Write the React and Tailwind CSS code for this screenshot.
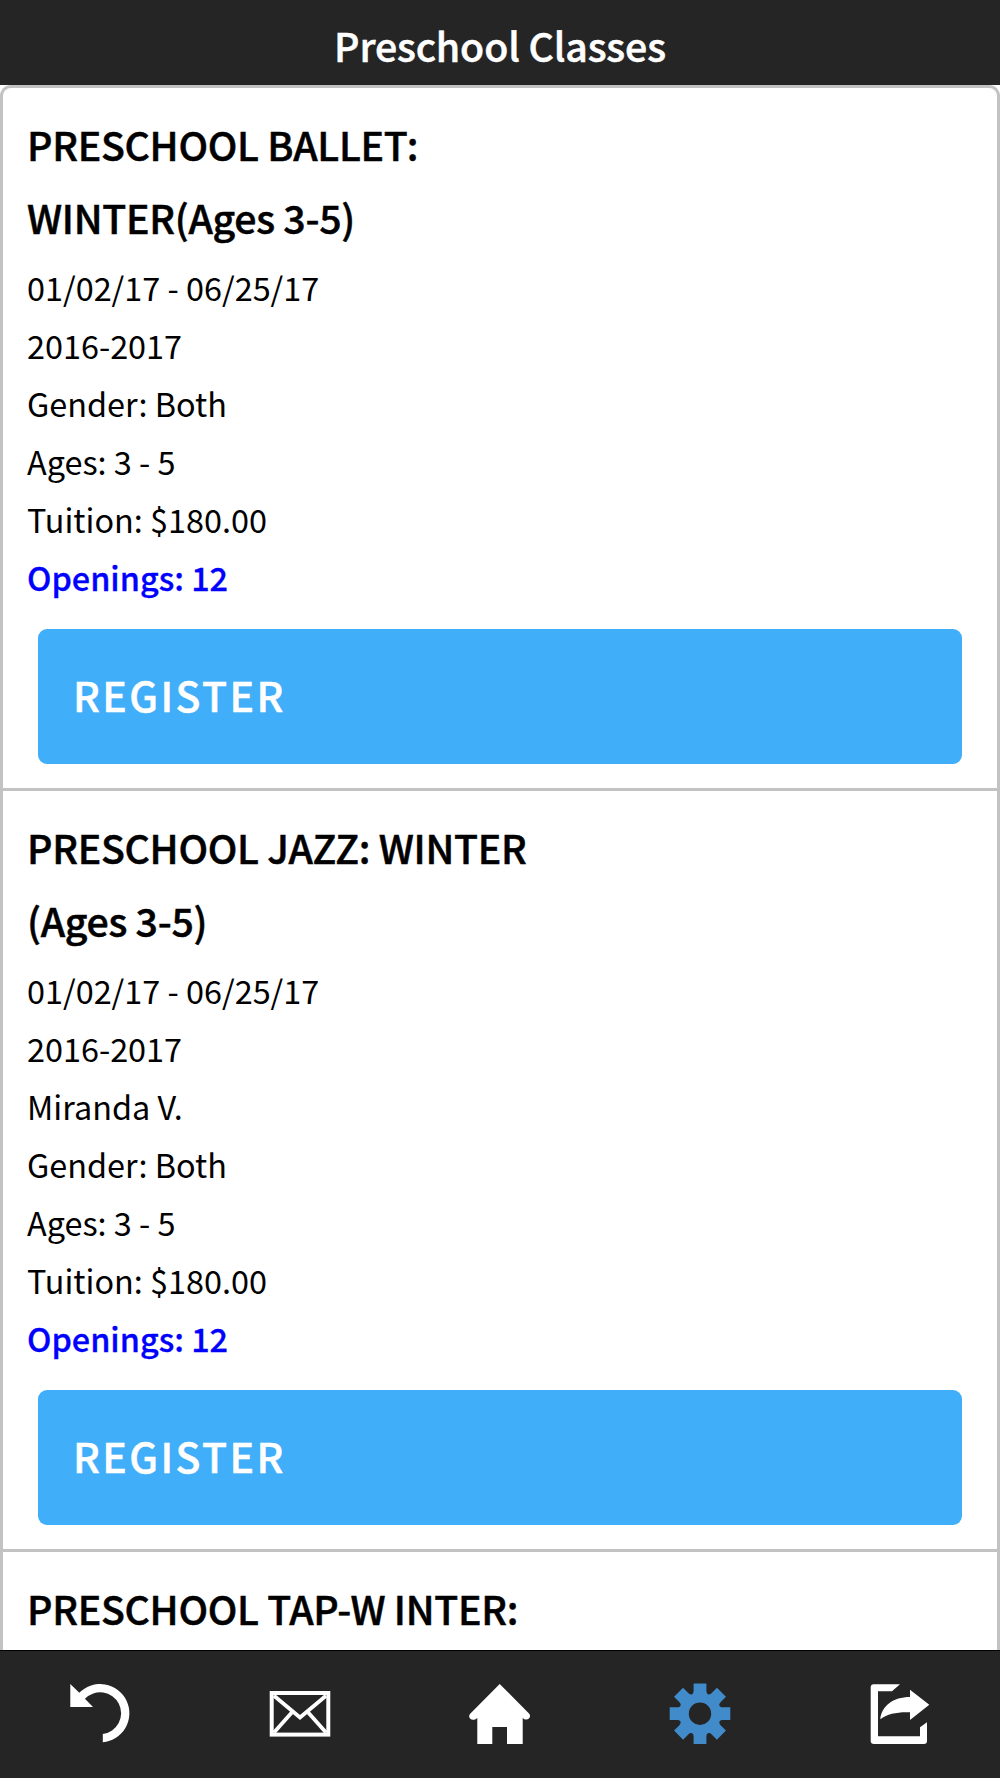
import React from 'react';

const classes = [
  {
    id: 'ballet',
    title: ['PRESCHOOL BALLET:', 'WINTER(Ages 3-5)'],
    details: ['01/02/17 - 06/25/17', '2016-2017', 'Gender: Both', 'Ages: 3 - 5', 'Tuition: $180.00'],
    openings: 12,
  },
  {
    id: 'jazz',
    title: ['PRESCHOOL JAZZ: WINTER', '(Ages 3-5)'],
    details: ['01/02/17 - 06/25/17', '2016-2017', 'Miranda V.', 'Gender: Both', 'Ages: 3 - 5', 'Tuition: $180.00'],
    openings: 12,
  },
  {
    id: 'tap',
    title: ['PRESCHOOL TAP-W INTER:'],
  },
];

function BackIcon() {
  return (
    <svg className="w-16 h-16" viewBox="0 0 64 64" fill="currentColor">
      <path d="M2.3 2L11.3 10.8A29.2 29.2 0 1 1 34.8 60.3V52.1A21 21 0 1 0 16.9 16.8L25 25H2.3Z" />
    </svg>
  );
}

function MailIcon() {
  return (
    <svg className="w-16 h-16" viewBox="0 0 64 64" fill="none" stroke="currentColor" strokeWidth="4">
      <rect x="3.7" y="11" width="56.6" height="41.6" />
      <path d="M6 13.8L32 35.5L58 13.8M6 50.6L23.8 30.4M58 50.6L40.2 30.4" strokeWidth="3.8" />
    </svg>
  );
}

function HomeIcon() {
  return (
    <svg className="w-16 h-16" viewBox="0 0 64 64" fill="currentColor">
      <path d="M31.7 2L61 31.5C64 35 60 39 56 37L54.7 36V62H39V45H24.3V62H9.3V36L7.5 37.2C3 39.5-.8 35 2.2 31.7Z" />
    </svg>
  );
}

// Eight square teeth joined by rounded notches
function gearPath() {
  const at = (x, y, turn) => {
    const a = (turn * Math.PI) / 4;
    const px = 32 + x * Math.cos(a) - y * Math.sin(a);
    const py = 31.7 + x * Math.sin(a) + y * Math.cos(a);
    return `${px.toFixed(2)} ${py.toFixed(2)}`;
  };
  let d = `M${at(-6.4, -23, 0)}`;
  for (let i = 0; i < 8; i++) {
    d += `L${at(-6.4, -30.3, i)}L${at(6.4, -30.3, i)}L${at(6.4, -23, i)}`;
    d += `C${at(6.4, -19.2, i)} ${at(-6.4, -19.2, i + 1)} ${at(-6.4, -23, i + 1)}`;
  }
  return `${d}ZM43.2 31.7A11.2 11.2 0 1 0 20.8 31.7A11.2 11.2 0 1 0 43.2 31.7Z`;
}

function GearIcon() {
  return (
    <svg className="w-16 h-16 text-[#428bca]" viewBox="0 0 64 64" fill="currentColor">
      <path fillRule="evenodd" d={gearPath()} />
    </svg>
  );
}

function ShareIcon() {
  return (
    <svg className="w-16 h-16" viewBox="0 0 64 64" fill="currentColor">
      <path d="M32 2.2L24 9.3H10V54.3H52V45.3L59 40.3V59Q59 62 56 62H6Q2.7 62 2.7 58.7V5.2Q2.7 2.2 5.7 2.2Z" />
      <path d="M12.3 37.3C13.5 24 25 15 42 15V7.7L61.3 22.7L42 38V30.3C30 29.8 20 31.5 12.3 37.3Z" />
    </svg>
  );
}

function ClassCard({ item }) {
  return (
    <li className="border-b-[3px] last:border-b-0 border-[#c2c2c2] pl-6 pr-[35px] pt-5 pb-6 shrink-0">
      <h2 className="text-[39.3px] leading-[72.5px] font-medium tracking-[-0.3px] [-webkit-text-stroke:0.5px_currentColor] mb-[5px]">
        {item.title.map((line) => (
          <span key={line} className="block">{line}</span>
        ))}
      </h2>
      {item.details && (
        <>
          <div className="text-[32.4px] leading-[58px]">
            {item.details.map((line) => (
              <p key={line}>{line}</p>
            ))}
            <p className="font-medium text-[#0000ff] [-webkit-text-stroke:0.3px_currentColor]">Openings: {item.openings}</p>
          </div>
          <button className="block w-[924px] h-[135px] mt-[23px] ml-[11px] rounded-[9px] bg-[#41aef9] pl-[35px] pb-1 text-left text-white text-[41px] font-medium tracking-[2.4px] [-webkit-text-stroke:0.5px_currentColor]">
            REGISTER
          </button>
        </>
      )}
    </li>
  );
}

export default function App() {
  return (
    <div className="w-[1000px] h-[1778px] flex flex-col overflow-hidden bg-white text-black font-['Noto_Sans_CJK_JP','Noto_Sans_CJK_SC',sans-serif]">
      <header className="h-[85px] shrink-0 bg-[#252525] pt-1.5 flex items-center justify-center">
        <h1 className="text-white text-[39.3px] font-medium tracking-[-0.15px] [-webkit-text-stroke:0.5px_currentColor]">Preschool Classes</h1>
      </header>

      <main className="flex-1 min-h-0 overflow-hidden">
        <ul className="flex flex-col min-h-full border-[3px] border-b-0 border-[#c2c2c2] rounded-t-[11px]">
          {classes.map((item) => (
            <ClassCard key={item.id} item={item} />
          ))}
        </ul>
      </main>

      <nav className="h-32 shrink-0 bg-[#252525] border-t border-black pb-0.5 text-white grid grid-cols-5 items-center justify-items-center">
        <BackIcon />
        <MailIcon />
        <HomeIcon />
        <GearIcon />
        <ShareIcon />
      </nav>
    </div>
  );
}
